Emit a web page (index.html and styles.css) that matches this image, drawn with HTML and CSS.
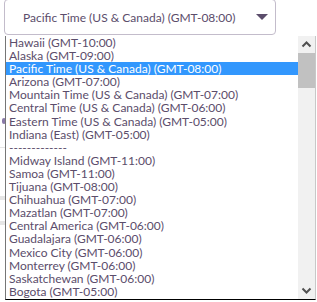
FILE: index.html
```html
<!DOCTYPE html>
<html lang="en">
<head>
  <meta charset="UTF-8">
  <title>Time zone</title>
  <link rel="stylesheet" href="styles.css">
</head>
<body>
  <div class="field">
    <div class="select">
      <span class="value">Pacific Time (US &amp; Canada) (GMT-08:00)</span>
      <span class="caret"></span>
    </div>

    <div class="behind">
      <div class="dot"></div>
      <div class="rule r1"></div>
      <div class="rule r2"></div>
      <div class="rule r3"></div>
    </div>

    <div class="list">
      <ul class="options">
        <li>Hawaii (GMT-10:00)</li>
        <li>Alaska (GMT-09:00)</li>
        <li class="selected">Pacific Time (US &amp; Canada) (GMT-08:00)</li>
        <li>Arizona (GMT-07:00)</li>
        <li>Mountain Time (US &amp; Canada) (GMT-07:00)</li>
        <li>Central Time (US &amp; Canada) (GMT-06:00)</li>
        <li>Eastern Time (US &amp; Canada) (GMT-05:00)</li>
        <li>Indiana (East) (GMT-05:00)</li>
        <li>-------------</li>
        <li>Midway Island (GMT-11:00)</li>
        <li>Samoa (GMT-11:00)</li>
        <li>Tijuana (GMT-08:00)</li>
        <li>Chihuahua (GMT-07:00)</li>
        <li>Mazatlan (GMT-07:00)</li>
        <li>Central America (GMT-06:00)</li>
        <li>Guadalajara (GMT-06:00)</li>
        <li>Mexico City (GMT-06:00)</li>
        <li>Monterrey (GMT-06:00)</li>
        <li>Saskatchewan (GMT-06:00)</li>
        <li>Bogota (GMT-05:00)</li>
      </ul>
      <div class="scrollbar">
        <svg class="arrow" width="17" height="17" viewBox="0 0 17 17"><path d="M4.5 10.5 L8.5 6.5 L12.5 10.5" fill="none" stroke="#505050" stroke-width="2"/></svg>
        <div class="track"><div class="thumb"></div></div>
        <svg class="arrow" width="17" height="17" viewBox="0 0 17 17"><path d="M4.5 6.5 L8.5 10.5 L12.5 6.5" fill="none" stroke="#505050" stroke-width="2"/></svg>
      </div>
    </div>
  </div>
</body>
</html>
```

FILE: styles.css
```css
body {
  margin: 0;
  background: #fff;
  font-family: Lato, "Liberation Sans", sans-serif;
  color: #5b4d6b;
}
.field {
  position: relative;
  width: 317px;
  height: 302px;
  overflow: hidden;
}
.select {
  margin: -1px 0 0 4px;
  width: 272px;
  height: 36px;
  border: 1px solid #c3bccb;
  border-radius: 4px;
  box-sizing: border-box;
  display: flex;
  align-items: center;
  padding: 0 7px 0 18px;
  font-size: 12px;
}
.value {
  flex: 1;
}
.caret {
  width: 0;
  height: 0;
  border-left: 6px solid transparent;
  border-right: 6px solid transparent;
  border-top: 6px solid #5b4d6b;
}
.behind .dot {
  position: absolute;
  left: 2px;
  top: 118px;
  width: 4px;
  height: 6px;
  border-radius: 3px;
  background: #8a7aa8;
}
.behind .rule {
  position: absolute;
  left: 0;
  width: 5px;
  background: #e6e6e6;
}
.r1 { top: 147px; height: 1px; }
.r2 { top: 196px; height: 4px; }
.r3 { top: 221px; height: 4px; }
.list {
  position: absolute;
  left: 5px;
  top: 36px;
  width: 311px;
  height: 264px;
  background: #fff;
  border-left: 1px solid #767676;
  border-bottom: 1px solid #000;
  border-right: 1px solid #c8c8c8;
  box-sizing: border-box;
  display: flex;
}
.options {
  list-style: none;
  margin: 0;
  padding: 0;
  flex: 1;
  font-size: 12px;
  line-height: 13.1px;
  overflow: hidden;
}
.options li {
  padding-left: 3px;
  white-space: nowrap;
}
.options .selected {
  background: #3297fd;
  color: #fff;
}
.scrollbar {
  width: 17px;
  background: #f1f1f1;
  display: flex;
  flex-direction: column;
}
.arrow {
  display: block;
  flex: none;
}
.track {
  flex: 1;
}
.thumb {
  height: 35px;
  background: #c1c1c1;
}
```
